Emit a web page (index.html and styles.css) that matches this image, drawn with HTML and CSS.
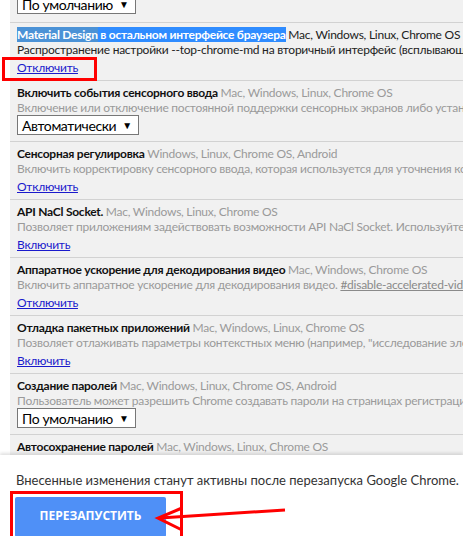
FILE: index.html
```html
<!DOCTYPE html>
<html lang="ru">
<head>
  <meta charset="UTF-8" />
  <meta name="viewport" content="width=device-width, initial-scale=1.0"/>
  <title>Экспериментальные функции</title>
  <link rel="stylesheet" href="styles.css">
</head>
<body>
  <div class="page">
    <div class="flags">
      <div class="flags-inner">
        <div class="flag flag-top">
          <span class="dropdown">По умолчанию <span class="arrow">▼</span></span>
        </div>

        <div class="flag flag-changed">
          <div class="flag-title"><span class="sel sel-a">Material Design</span><span class="sel"> в остальном интерфейсе браузера</span> <span class="platforms">Mac, Windows, Linux, Chrome OS</span></div>
          <div class="flag-desc">Распространение настройки --top-chrome-md на вторичный интерфейс (всплывающие подсказки и т. д.)</div>
          <a class="flag-link" href="#">Отключить</a>
        </div>

        <div class="flag flag-select">
          <div class="flag-title">Включить события сенсорного ввода <span class="platforms">Mac, Windows, Linux, Chrome OS</span></div>
          <div class="flag-desc">Включение или отключение постоянной поддержки сенсорных экранов либо установка ее автоматически</div>
          <span class="dropdown">Автоматически <span class="arrow">▼</span></span>
        </div>

        <div class="flag">
          <div class="flag-title">Сенсорная регулировка <span class="platforms">Windows, Linux, Chrome OS, Android</span></div>
          <div class="flag-desc">Включить корректировку сенсорного ввода, которая используется для уточнения координат касания</div>
          <a class="flag-link" href="#">Отключить</a>
        </div>

        <div class="flag">
          <div class="flag-title">API NaCl Socket. <span class="platforms">Mac, Windows, Linux, Chrome OS</span></div>
          <div class="flag-desc">Позволяет приложениям задействовать возможности API NaCl Socket. Используйте эту функцию только для тестирования</div>
          <a class="flag-link" href="#">Включить</a>
        </div>

        <div class="flag">
          <div class="flag-title">Аппаратное ускорение для декодирования видео <span class="platforms">Mac, Windows, Chrome OS</span></div>
          <div class="flag-desc">Включить аппаратное ускорение для декодирования видео. <a class="anchor" href="#">#disable-accelerated-video-decode</a></div>
          <a class="flag-link" href="#">Отключить</a>
        </div>

        <div class="flag">
          <div class="flag-title">Отладка пакетных приложений <span class="platforms">Mac, Windows, Linux, Chrome OS</span></div>
          <div class="flag-desc">Позволяет отлаживать параметры контекстных меню (например, "исследование элементов") в пакетных приложениях</div>
          <a class="flag-link" href="#">Включить</a>
        </div>

        <div class="flag flag-select">
          <div class="flag-title">Создание паролей <span class="platforms">Mac, Windows, Linux, Chrome OS, Android</span></div>
          <div class="flag-desc">Пользователь может разрешить Chrome создавать пароли на страницах регистрации аккаунтов</div>
          <span class="dropdown">По умолчанию <span class="arrow">▼</span></span>
        </div>

        <div class="flag">
          <div class="flag-title">Автосохранение паролей <span class="platforms">Mac, Windows, Linux, Chrome OS</span></div>
          <div class="flag-desc">Сохранять пароли без запроса подтверждения</div>
          <a class="flag-link" href="#">Включить</a>
        </div>
      </div>
    </div>

    <div class="relaunch">
      <p class="relaunch-note">Внесенные изменения станут активны после перезапуска Google Chrome.</p>
      <button class="relaunch-btn">ПЕРЕЗАПУСТИТЬ</button>
    </div>

    <!-- red marks drawn on top -->
    <svg class="marks" width="463" height="536" viewBox="0 0 463 536">
      <rect x="3.5" y="58.5" width="92" height="21" fill="none" stroke="#f00" stroke-width="3"/>
      <rect x="11.5" y="492.5" width="170" height="50" fill="none" stroke="#f00" stroke-width="3"/>
      <path d="M285 510 L160 518" stroke="#f00" stroke-width="3" fill="none"/>
      <path d="M182 508 L158 518 L182 530" stroke="#f00" stroke-width="3" fill="none"/>
    </svg>
  </div>
</body>
</html>
```

FILE: styles.css
```css
body {
  margin: 0;
  background: white;
  font-family: Lato, "Open Sans", sans-serif;
  font-size: 12px;
}
.page {
  position: relative;
  width: 463px;
  height: 536px;
  overflow: hidden;
  display: flex;
  flex-direction: column;
}
.flags {
  height: 455px;
  flex: none;
  overflow: hidden;
  margin-left: 10px;
  background: #f1f1f1;
}
.flags-inner {
  margin-top: -10px;
}
.flag {
  border-top: 1px solid #d2d2d2;
  padding: 4px 0 5px 7px;
  white-space: nowrap;
  overflow: hidden;
  letter-spacing: -0.25px;
}
.flag-select {
  padding-bottom: 6px;
}
.flag-top {
  border-top: none;
  padding-bottom: 8px;
}
.flag-title {
  font-weight: bold;
  line-height: 15px;
  color: #111;
}
.platforms {
  font-weight: normal;
  color: #9a9a9a;
}
.flag-desc {
  line-height: 15px;
  color: #9a9a9a;
}
.flag-changed .platforms,
.flag-changed .flag-desc {
  color: #222;
}
.sel {
  background: #2f8cff;
  color: white;
}
.sel-a {
  background: #4b92d6;
}
.anchor {
  color: #8a8a8a;
}
.flag-link {
  display: block;
  width: max-content;
  margin-top: 3px;
  line-height: 15px;
  color: #1a1acc;
}
.dropdown {
  display: block;
  width: max-content;
  height: 18px;
  padding: 0 6px 0 4px;
  border: 1px solid #777;
  background: white;
  font-size: 14px;
  letter-spacing: -0.4px;
  line-height: 18px;
  color: #000;
}
.arrow {
  font-size: 10px;
  vertical-align: 2px;
  margin-left: 3px;
}
.relaunch {
  flex: 1;
  background: white;
  box-shadow: 0 -2px 3px rgba(0,0,0,0.12);
  padding: 16px 0 0 16px;
  position: relative;
}
.relaunch-note {
  margin: 0;
  font-size: 13px;
  line-height: 18px;
  color: #333;
}
.relaunch-btn {
  margin-top: 8px;
  width: 151px;
  height: 40px;
  margin-left: -1px;
  border: none;
  border-radius: 2px;
  background: #4f90f7;
  color: white;
  font-family: "Open Sans", sans-serif;
  font-weight: bold;
  font-size: 12px;
  padding-bottom: 4px;
}
.marks {
  position: absolute;
  left: 0;
  top: 0;
  pointer-events: none;
}
```
